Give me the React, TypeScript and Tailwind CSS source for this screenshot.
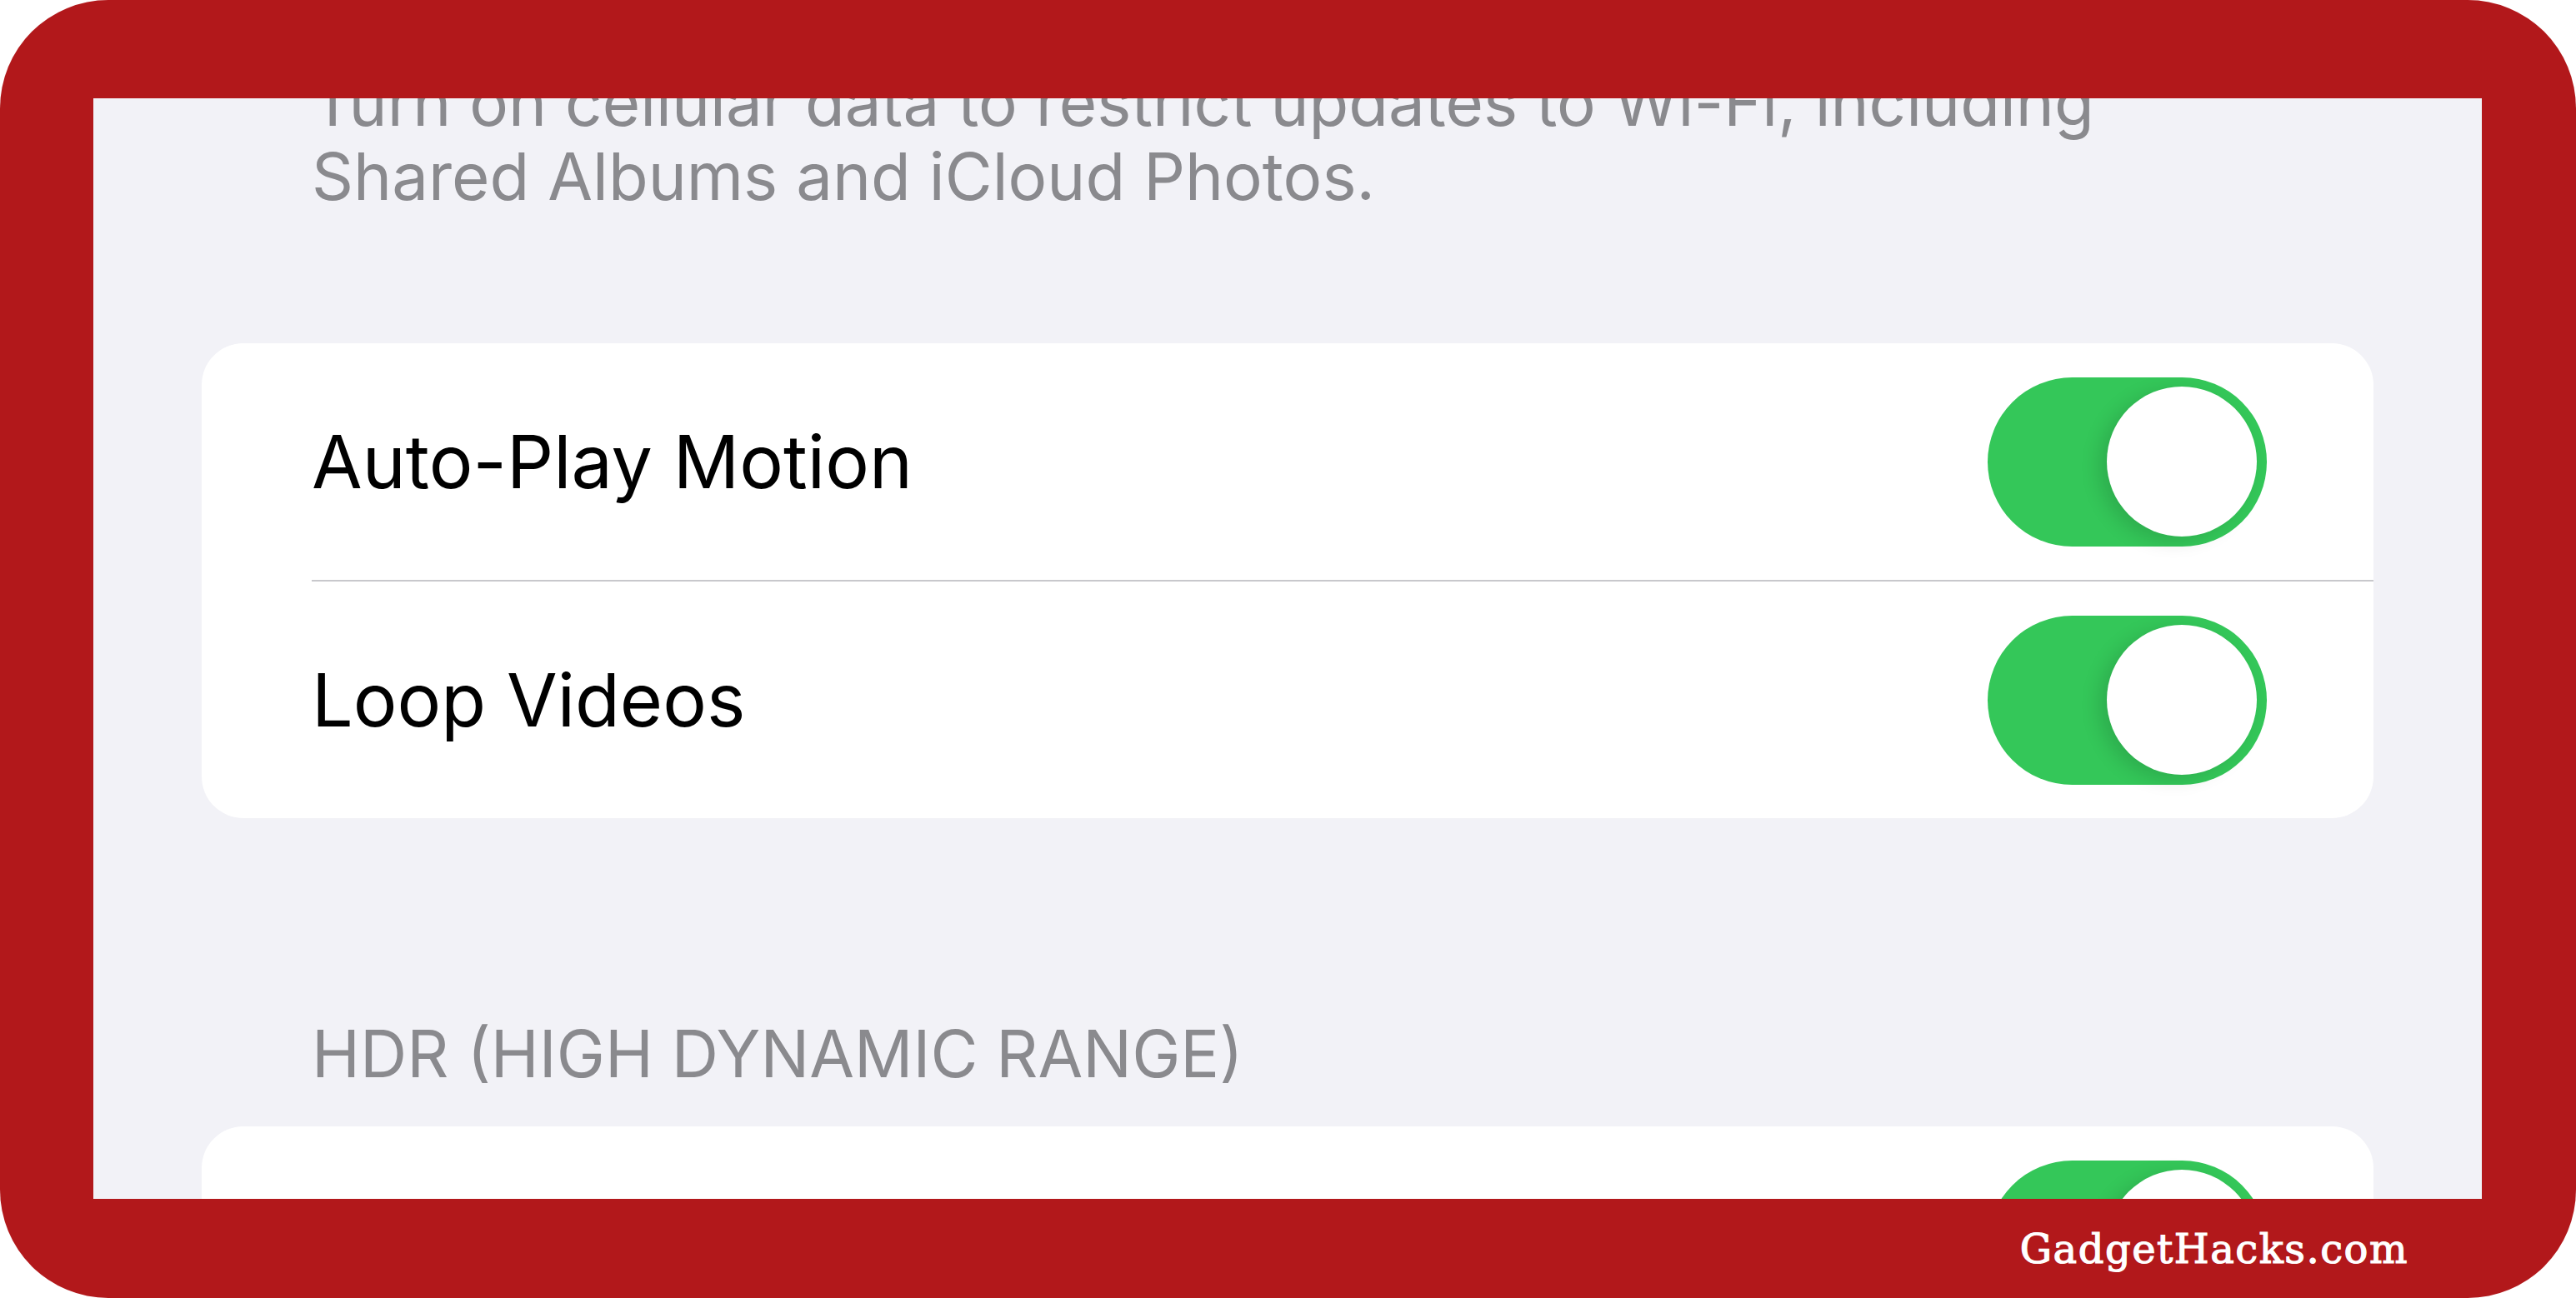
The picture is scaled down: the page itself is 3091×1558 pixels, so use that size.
import React from 'react';

function Toggle() {
  return (
    <div className="flex h-[203px] w-[335px] shrink-0 items-center justify-end rounded-full bg-[#34c759] pr-[12px]">
      <div className="h-[180px] w-[180px] rounded-full bg-white shadow-[-10px_6px_22px_rgba(0,0,0,0.13)]" />
    </div>
  );
}

function Row({ label }: { label?: string }) {
  return (
    <div className="flex h-[284px] items-center justify-between pl-[132px] pr-[128px]">
      <span className="text-[88px] leading-none text-black">{label}</span>
      <Toggle />
    </div>
  );
}

export default function App() {
  return (
    <div className="h-[1558px] w-[3091px] bg-white" style={{ fontFamily: 'Inter, "Noto Sans", sans-serif' }}>
      <div className="flex h-full w-full flex-col rounded-[130px] bg-[#b2181b] pl-[112px] pr-[113px] pt-[118px]">
        <div className="flex-1 overflow-hidden bg-[#f2f2f7] px-[130px]">
          <div className="-mt-[40px] pl-[132px] text-[78px] leading-[89px] text-[#8a8a8e]">
            <div className="whitespace-nowrap">Turn on cellular data to restrict updates to Wi-Fi, including</div>
            <div className="whitespace-nowrap">Shared Albums and iCloud Photos.</div>
          </div>

          <div className="mt-[156px] overflow-hidden rounded-[50px] bg-white">
            <Row label="Auto-Play Motion" />
            <div className="ml-[132px] h-[2px] bg-[#c8c8cc]" />
            <Row label="Loop Videos" />
          </div>

          <div className="mt-[235px] pl-[132px] text-[78px] leading-[96px] text-[#8a8a8e]">
            HDR (HIGH DYNAMIC RANGE)
          </div>

          <div className="mt-[39px] overflow-hidden rounded-[50px] bg-white">
            <Row />
          </div>
        </div>

        <div className="flex h-[119px] shrink-0 items-center justify-end pr-[88px]">
          <span
            className="text-[48px] tracking-[1.5px] text-white [-webkit-text-stroke:1.2px_white]"
            style={{ fontFamily: '"DejaVu Serif", serif' }}
          >
            GadgetHacks.com
          </span>
        </div>
      </div>
    </div>
  );
}
